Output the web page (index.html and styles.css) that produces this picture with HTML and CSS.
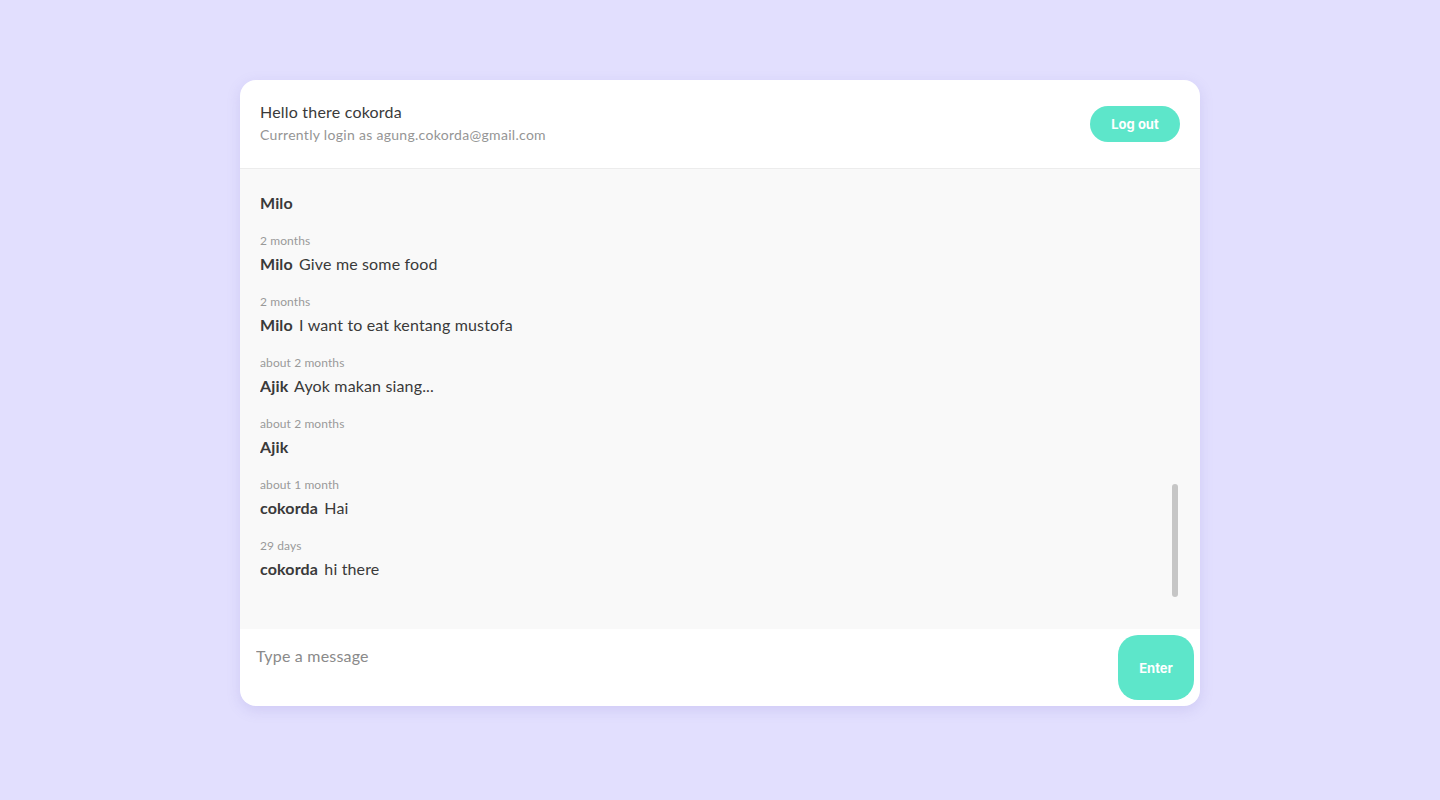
FILE: index.html
```html
<!DOCTYPE html>
<html lang="en">
<head>
<meta charset="utf-8">
<title>Chat</title>
<link rel="stylesheet" href="styles.css">
</head>
<body>
<main class="page">
  <section class="card">
    <header class="card-header">
      <div class="greeting">
        <div class="greeting-title">Hello there cokorda</div>
        <div class="greeting-sub">Currently login as agung.cokorda@gmail.com</div>
      </div>
      <button class="btn btn-logout">Log out</button>
    </header>
    <div class="messages">
      <div class="message-list">
        <div class="msg"><div class="msg-time">2 months</div><div class="msg-line"><b class="msg-name">Milo</b></div></div>
        <div class="msg"><div class="msg-time">2 months</div><div class="msg-line"><b class="msg-name">Milo</b> Give me some food</div></div>
        <div class="msg"><div class="msg-time">2 months</div><div class="msg-line"><b class="msg-name">Milo</b> I want to eat kentang mustofa</div></div>
        <div class="msg"><div class="msg-time">about 2 months</div><div class="msg-line"><b class="msg-name">Ajik</b> Ayok makan siang...</div></div>
        <div class="msg"><div class="msg-time">about 2 months</div><div class="msg-line"><b class="msg-name">Ajik</b></div></div>
        <div class="msg"><div class="msg-time">about 1 month</div><div class="msg-line"><b class="msg-name">cokorda</b> Hai</div></div>
        <div class="msg"><div class="msg-time">29 days</div><div class="msg-line"><b class="msg-name">cokorda</b> hi there</div></div>
      </div>
      <div class="scroll-thumb"></div>
    </div>
    <form class="composer" onsubmit="return false">
      <input class="composer-input" type="text" placeholder="Type a message">
      <button class="btn btn-enter" type="submit">Enter</button>
    </form>
  </section>
</main>
</body>
</html>
```

FILE: styles.css
```css
* { box-sizing: border-box; }
html, body { margin: 0; padding: 0; }
body {
  background: #e2dffe;
  font-family: Lato, "Noto Sans", sans-serif;
  color: #3a3a3a;
  height: 800px;
}
.page {
  display: flex;
  justify-content: center;
  padding-top: 80px;
}
.card {
  width: 960px;
  background: #fff;
  border-radius: 16px;
  box-shadow: 0 4px 14px rgba(120, 110, 200, 0.18);
  overflow: hidden;
  display: flex;
  flex-direction: column;
}
.card-header {
  height: 89px;
  display: flex;
  align-items: center;
  justify-content: space-between;
  padding: 0 20px 4px;
  border-bottom: 1px solid #ececec;
}
.greeting-title {
  font-size: 16px;
  line-height: 22px;
  letter-spacing: 0.2px;
  color: #3a3a3a;
}
.greeting-sub {
  font-size: 14px;
  line-height: 18px;
  letter-spacing: 0.3px;
  color: #959595;
  margin-top: 3px;
}
.btn {
  border: none;
  background: #5de6ca;
  color: #fff;
  font-family: Inter, Roboto, sans-serif;
  font-weight: 700;
  font-size: 13px;
  cursor: pointer;
}
.btn-logout {
  width: 90px;
  height: 36px;
  border-radius: 18px;
  margin-top: 4px;
}
.messages {
  position: relative;
  height: 460px;
  background: #f9f9f9;
  padding: 28px 20px 30px 20px;
}
.message-list {
  height: 402px;
  overflow: hidden;
  display: flex;
  flex-direction: column;
  justify-content: flex-end;
}
.msg {
  flex: none;
  margin-bottom: 19px;
}
.msg-time {
  font-size: 12px;
  line-height: 16px;
  letter-spacing: 0.1px;
  color: #999;
}
.msg-line {
  margin-top: 4px;
  font-size: 16px;
  line-height: 22px;
  letter-spacing: 0.15px;
  color: #3a3a3a;
}
.msg-name {
  font-weight: 700;
  margin-right: 2px;
}
.scroll-thumb {
  position: absolute;
  right: 22px;
  top: 315px;
  width: 6px;
  height: 113px;
  border-radius: 3px;
  background: #c6c6c6;
}
.composer {
  height: 77px;
  display: flex;
  align-items: flex-start;
  margin: 0;
  padding: 6px 6px 0 16px;
}
.composer-input {
  flex: 1;
  border: none;
  outline: none;
  background: transparent;
  font-family: Lato, "Noto Sans", sans-serif;
  font-size: 16px;
  letter-spacing: 0.2px;
  color: #3a3a3a;
  height: 40px;
  padding: 0;
}
.composer-input::placeholder { color: #8a8a8a; }
.btn-enter {
  width: 76px;
  height: 65px;
  border-radius: 20px;
}
```
